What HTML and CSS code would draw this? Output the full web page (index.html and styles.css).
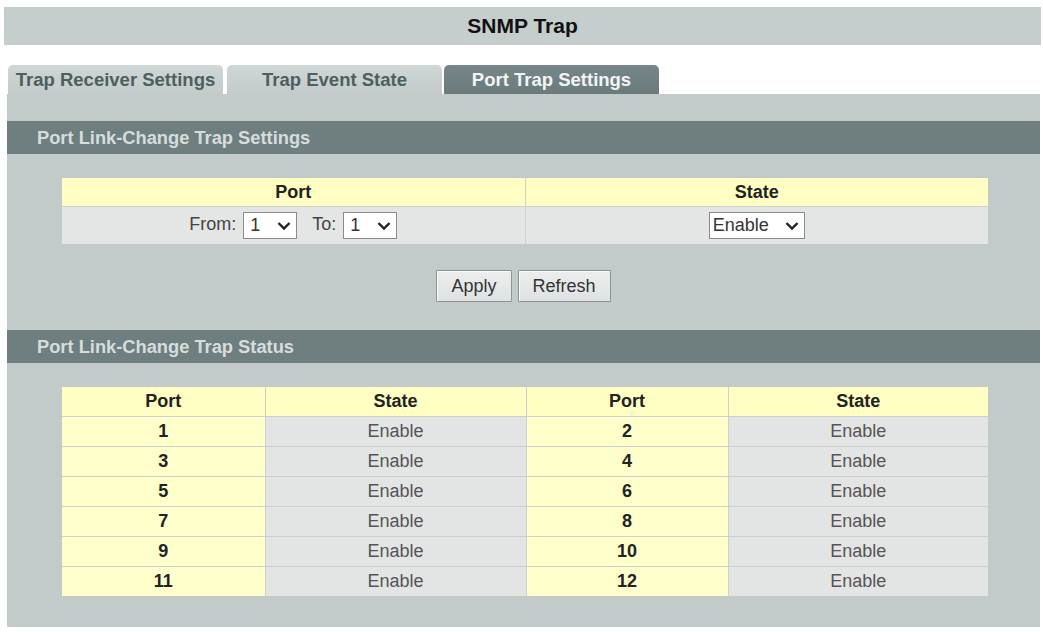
FILE: index.html
```html
<!DOCTYPE html>
<html>
<head>
<meta charset="utf-8">
<title>SNMP Trap</title>
<link rel="stylesheet" href="styles.css">
</head>
<body>
<div class="titlebar">SNMP Trap</div>
<div class="tabs">
  <div class="tab">Trap Receiver Settings</div>
  <div class="tab">Trap Event State</div>
  <div class="tab active">Port Trap Settings</div>
</div>
<div class="panel">
  <div class="section-head">Port Link-Change Trap Settings</div>
  <table class="grid settings">
    <tr class="head"><th>Port</th><th>State</th></tr>
    <tr class="ctrl">
      <td>
        <span class="label">From:</span>
        <span class="select small"><span class="val">1</span><svg class="chev" viewBox="0 0 14 10" width="14" height="10"><path d="M1.5 2 L7 7.5 L12.5 2" fill="none" stroke="#222" stroke-width="2.4"/></svg></span>
        <span class="label to">To:</span>
        <span class="select small"><span class="val">1</span><svg class="chev" viewBox="0 0 14 10" width="14" height="10"><path d="M1.5 2 L7 7.5 L12.5 2" fill="none" stroke="#222" stroke-width="2.4"/></svg></span>
      </td>
      <td>
        <span class="select wide"><span class="val">Enable</span><svg class="chev" viewBox="0 0 14 10" width="14" height="10"><path d="M1.5 2 L7 7.5 L12.5 2" fill="none" stroke="#222" stroke-width="2.4"/></svg></span>
      </td>
    </tr>
  </table>
  <div class="buttons">
    <button class="btn">Apply</button>
    <button class="btn">Refresh</button>
  </div>
  <div class="section-head second">Port Link-Change Trap Status</div>
  <table class="grid status">
    <colgroup><col class="c1"><col class="c2"><col class="c3"><col class="c4"></colgroup>
    <tr class="head"><th>Port</th><th>State</th><th>Port</th><th>State</th></tr>
    <tr><td class="port">1</td><td class="state">Enable</td><td class="port">2</td><td class="state">Enable</td></tr>
    <tr><td class="port">3</td><td class="state">Enable</td><td class="port">4</td><td class="state">Enable</td></tr>
    <tr><td class="port">5</td><td class="state">Enable</td><td class="port">6</td><td class="state">Enable</td></tr>
    <tr><td class="port">7</td><td class="state">Enable</td><td class="port">8</td><td class="state">Enable</td></tr>
    <tr><td class="port">9</td><td class="state">Enable</td><td class="port">10</td><td class="state">Enable</td></tr>
    <tr><td class="port">11</td><td class="state">Enable</td><td class="port">12</td><td class="state">Enable</td></tr>
  </table>
</div>
</body>
</html>
```
FILE: styles.css
```css
html, body {
  margin: 0;
  padding: 0;
  background: #ffffff;
}
body {
  padding-top: 7px;
  font-family: "Liberation Sans", Arial, sans-serif;
  font-size: 18px;
  color: #222;
}
.titlebar {
  margin: 0 2px 0 4px;
  height: 38px;
  line-height: 38px;
  text-align: center;
  background: #c6cdcd;
  font-weight: bold;
  font-size: 21px;
  color: #111;
}
.tabs {
  display: flex;
  margin-top: 20px;
  padding-left: 8px;
  height: 29px;
}
.tab {
  width: 215px;
  margin-right: 4px;
  height: 29px;
  line-height: 30px;
  text-align: center;
  font-weight: bold;
  font-size: 18.5px;
  color: #4d5f5f;
  background: linear-gradient(#cfd6d6, #c3cbcb);
  border-radius: 5px 5px 0 0;
  white-space: nowrap;
}
.tab.active {
  margin-left: -2px;
  color: #f2f5f5;
  background: linear-gradient(#77868a, #6b7a7a);
}
.panel {
  margin: 0 3px 0 7px;
  background: #c2caca;
  padding: 27px 0 31px;
}
.section-head {
  height: 33px;
  line-height: 33px;
  padding-left: 30px;
  background: #6f7f7f;
  color: #d6dddd;
  font-weight: bold;
  font-size: 18.3px;
}
.section-head.second {
  margin-top: 28px;
}
.grid {
  border-collapse: collapse;
  border-style: hidden;
  margin-left: 55px;
  width: 926px;
  table-layout: fixed;
}
.grid th, .grid td {
  border: 1px solid #cdd0cc;
  padding: 0;
  text-align: center;
}
.grid th {
  background: #ffffc4;
  font-weight: bold;
  color: #222;
}
.settings {
  margin-top: 24px;
}
.settings .head th {
  height: 28px;
}
.settings .ctrl td {
  height: 37px;
  background: #e4e5e5;
  color: #444;
}
.label {
  margin-right: 2px;
}
.label.to {
  margin-left: 10px;
}
.select {
  display: inline-flex;
  align-items: center;
  justify-content: space-between;
  box-sizing: border-box;
  height: 27px;
  vertical-align: middle;
  background: #ffffff;
  border: 1px solid #8a8c8c;
  padding: 0 5px 0 6px;
  color: #333;
}
.select.small {
  width: 54px;
}
.select.wide {
  width: 96px;
  padding-left: 3px;
}
.chev {
  display: block;
}
.buttons {
  display: flex;
  justify-content: center;
  gap: 6px;
  margin-top: 26px;
}
.btn {
  font-family: "Liberation Sans", Arial, sans-serif;
  font-size: 18px;
  color: #333;
  height: 32px;
  padding: 0 14px;
  background: linear-gradient(#eceeee, #dfe2e2);
  border: 1px solid #8f9393;
  border-radius: 1px;
  box-shadow: inset 1px 1px 0 #f8f8f8;
}
.status {
  margin-top: 24px;
}
.status .c1 { width: 203px; }
.status .c2 { width: 261px; }
.status .c3 { width: 202px; }
.status .c4 { width: 260px; }
.status th, .status td {
  height: 29px;
}
.status td.port {
  background: #ffffcc;
  font-weight: bold;
  color: #222;
}
.status td.state {
  background: #e3e4e4;
  color: #555;
}
```
